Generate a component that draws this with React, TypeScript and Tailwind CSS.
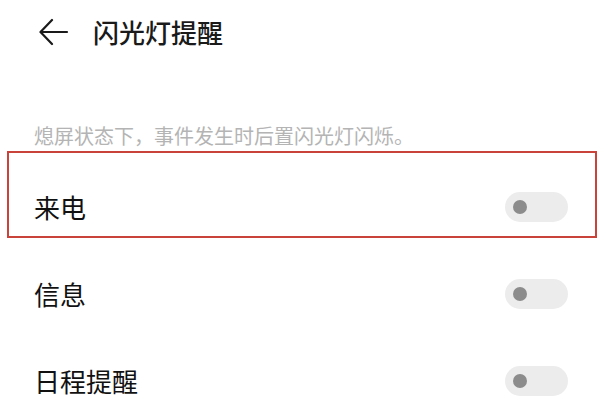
const font = { fontFamily: '"Noto Sans CJK SC", "Noto Sans", sans-serif' };

function BackArrow() {
  return (
    <svg width="30" height="28" viewBox="0 0 30 28" fill="none" stroke="#1a1a1a" strokeWidth="2.2" strokeLinecap="round" strokeLinejoin="round">
      <path d="M28 14H2" />
      <path d="M13 2L1.5 14L13 26" />
    </svg>
  );
}

function Toggle() {
  return (
    <div className="flex h-[30px] w-[63px] items-center rounded-full bg-[#ececec] pl-[8px]">
      <div className="h-[14px] w-[14px] rounded-full bg-[#8c8c8c]" />
    </div>
  );
}

function Row({ label }: { label: string }) {
  return (
    <div className="flex h-[87px] items-center justify-between pl-[34px] pr-[44px]">
      <span className="text-[26px] leading-none text-[#111]">{label}</span>
      <Toggle />
    </div>
  );
}

export default function App() {
  return (
    <div className="h-[418px] w-[612px] overflow-hidden bg-white" style={font}>
      {/* top bar */}
      <div className="flex h-[64px] items-center pl-[39px]">
        <BackArrow />
        <h1 className="ml-[24px] text-[26px] font-medium leading-none text-[#1a1a1a]">闪光灯提醒</h1>
      </div>

      <p className="mt-[60px] pl-[34px] text-[20px] leading-[24px] text-[#b4b4b4]">
        熄屏状态下，事件发生时后置闪光灯闪烁。
      </p>

      <div className="ml-[7px] mr-[15px] mt-[3px] flex h-[87px] items-center justify-between border-2 border-[#c9433b] pl-[25px] pr-[27px] pt-6">
        <span className="text-[26px] leading-none text-[#111]">来电</span>
        <Toggle />
      </div>

      <div className="mt-[12px]">
        <Row label="信息" />
        <Row label="日程提醒" />
      </div>
    </div>
  );
}
